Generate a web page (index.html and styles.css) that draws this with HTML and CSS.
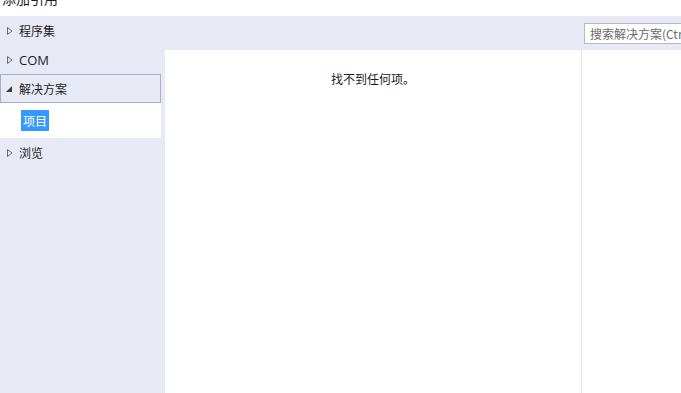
FILE: index.html
```html
<!DOCTYPE html>
<html>
<head>
    <title>添加引用</title>
    <meta charset="UTF-8">
    <link rel="stylesheet" href="styles.css">
</head>
<body>
    <div class="title-bar">添加引用</div>
    <div class="window">
        <div class="tree">
            <div class="node">
                <svg class="arrow" width="6" height="8" viewBox="0 0 6 8"><path d="M0.5 0.5 L5 4 L0.5 7.5 Z" fill="none" stroke="#6b6b6b"/></svg>
                <span>程序集</span>
            </div>
            <div class="node">
                <svg class="arrow" width="6" height="8" viewBox="0 0 6 8"><path d="M0.5 0.5 L5 4 L0.5 7.5 Z" fill="none" stroke="#6b6b6b"/></svg>
                <span class="latin">COM</span>
            </div>
            <div class="node selected">
                <svg class="arrow open" width="6" height="6" viewBox="0 0 6 6"><path d="M6 0 L6 6 L0 6 Z" fill="#3c3c3c"/></svg>
                <span>解决方案</span>
            </div>
            <div class="child">
                <span class="hl">项目</span>
            </div>
            <div class="node">
                <svg class="arrow" width="6" height="8" viewBox="0 0 6 8"><path d="M0.5 0.5 L5 4 L0.5 7.5 Z" fill="none" stroke="#6b6b6b"/></svg>
                <span>浏览</span>
            </div>
        </div>
        <div class="main">
            <div class="toolbar">
                <div class="search">搜索解决方案(Ctrl+E)</div>
            </div>
            <div class="list">找不到任何项。</div>
            <div class="details"></div>
        </div>
    </div>
</body>
</html>
```

FILE: styles.css
```css
body {
    margin: 0;
    height: 393px;
    overflow: hidden;
    font-family: "Noto Sans CJK SC", "Noto Sans", sans-serif;
    font-size: 12px;
    color: #1e1e1e;
    background: white;
    display: flex;
    flex-direction: column;
}
.title-bar {
    height: 25px;
    margin-top: -9px;
    line-height: 14px;
    font-size: 14px;
    padding-left: 2px;
    flex-shrink: 0;
}
.window {
    flex: 1;
    display: flex;
    background: #e7eaf5;
}
.tree {
    width: 165px;
    flex-shrink: 0;
}
.node {
    width: 161px;
    height: 29px;
    box-sizing: border-box;
    display: flex;
    align-items: center;
    padding-left: 6px;
    border: 1px solid transparent;
}
.node span {
    margin-left: 6px;
}
.node .latin {
    font-family: "Open Sans", "Noto Sans", sans-serif;
    font-size: 13px;
}
.node.selected {
    border-color: #a4b0c9;
}
.node.selected .arrow {
    margin-left: -1px;
    margin-right: 1px;
}
.child {
    width: 161px;
    height: 35px;
    background: white;
    display: flex;
    align-items: center;
    padding-left: 21px;
    box-sizing: border-box;
}
.hl {
    background: #3399ff;
    color: white;
    padding: 3px 2px;
    line-height: 15px;
}
.main {
    flex: 1;
    display: grid;
    grid-template-columns: 417px 1fr;
    grid-template-rows: 34px 1fr;
}
.toolbar {
    grid-column: 1 / 3;
    display: grid;
    grid-template-columns: 419px 1fr;
    align-items: start;
}
.search {
    grid-column: 2;
    margin-top: 7px;
    height: 21px;
    width: 160px;
    box-sizing: border-box;
    border: 1px solid #b4b9c6;
    background: white;
    color: #6a6a6a;
    line-height: 19px;
    padding-left: 5px;
    white-space: nowrap;
    overflow: hidden;
}
.list {
    background: white;
    text-align: center;
    padding-top: 21px;
    line-height: 16px;
    border-right: 1px solid #e2e2f2;
}
.details {
    background: white;
}
```
